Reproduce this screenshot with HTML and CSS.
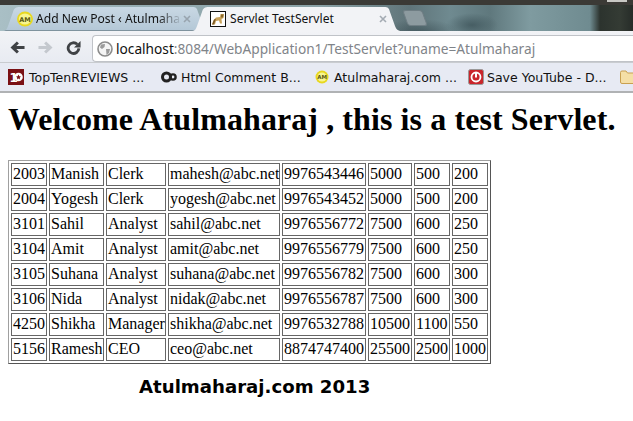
FILE: index.html
```
<!DOCTYPE html>
<html>
<head>
<meta charset="utf-8">
<title>Servlet TestServlet</title>
<link rel="stylesheet" href="styles.css">
</head>
<body>
<header class="chrome">
  <div class="topbar"><span class="winctl"></span></div>
  <div class="tabstrip">
    <div class="tab tab-bg">
      <svg class="fav" viewBox="0 0 16 16"><ellipse cx="8" cy="8" rx="8" ry="7.5" fill="#e8d820"/><ellipse cx="8" cy="8" rx="6.2" ry="5.6" fill="#f8f590"/><text x="8" y="10.6" class="am">AM</text></svg>
      <span class="tab-title fade">Add New Post ‹ Atulmahar</span>
      <svg class="close" viewBox="0 0 8 8"><path d="M1 1L7 7M7 1L1 7" stroke="#98a4ae" stroke-width="1.6"/></svg>
    </div>
    <div class="tab tab-active">
      <svg class="fav" viewBox="0 0 16 16"><rect x=".5" y=".5" width="15" height="15" fill="#fff" stroke="#111"/><path d="M2 13.500L4 8.500L6 6.500L10 6L10.500 3L14 3L13.500 7L11.500 8L12 12.500L10 12.500L9 9.500L6 10L5 13.500Z" fill="#c9a25a"/><path d="M2 13.500L4 8.500L6 8L5 10.500L4 13.500Z" fill="#7c5a24"/><path d="M11 3.500L13.500 3.500L13 6.500L11 6.500Z" fill="#8a6a2e"/></svg>
      <span class="tab-title">Servlet TestServlet</span>
      <svg class="close" viewBox="0 0 8 8"><path d="M1 1L7 7M7 1L1 7" stroke="#a4abb3" stroke-width="1.6"/></svg>
    </div>
    <div class="newtab"></div>
  </div>
  <div class="toolbar">
    <svg class="nav" viewBox="0 0 16 16"><path d="M.5 8L7.300 1.700L9.500 3.800L6.800 6.300H15.500V9.700H6.800L9.500 12.200L7.300 14.300Z" fill="#3f4245"/></svg>
    <svg class="nav" viewBox="0 0 16 16"><path d="M15.500 8L8.700 1.700L6.500 3.800L9.200 6.300H.5V9.700H9.200L6.500 12.200L8.700 14.300Z" fill="#c4c8ce"/></svg>
    <svg class="nav" viewBox="0 0 16 16"><path d="M12 4.600A5.700 5.700 0 1 0 13.700 9" fill="none" stroke="#3f4245" stroke-width="3"/><path d="M15.500 1V8H8.500Z" fill="#3f4245"/></svg>
    <div class="omnibox">
      <svg class="globe" viewBox="0 0 16 16"><circle cx="8" cy="8" r="7" fill="#f4f4f4" stroke="#8c8c8c" stroke-width="1.6"/><path d="M4 3.500L8 3L7.500 6L5 8L3 6.500ZM9 8L13 8L12 12L9.500 14Z" fill="#9a9a9a"/></svg>
      <span class="url"><span class="host">localhost</span>:8084/WebApplication1/TestServlet?uname=Atulmaharaj</span>
    </div>
  </div>
  <nav class="bookmarks">
    <div class="bm bm-1">
      <svg class="bm-icon" viewBox="0 0 16 16"><rect width="16" height="16" fill="#7a1014"/><text x="1.500" y="13" class="ten">1</text><circle cx="10.500" cy="8" r="4.300" fill="#fff"/><path d="M10.500 5.400L11.300 7.300L13 7.500L11.700 8.800L12 10.600L10.500 9.600L9 10.600L9.300 8.800L8 7.500L9.700 7.300Z" fill="#7a1014"/></svg>
      <span>TopTenREVIEWS ...</span>
    </div>
    <div class="bm bm-2">
      <svg class="bm-icon" viewBox="0 0 16 16"><circle cx="5.500" cy="8" r="4" fill="none" stroke="#222" stroke-width="3"/><circle cx="12" cy="8" r="2.600" fill="none" stroke="#222" stroke-width="2.400"/></svg>
      <span>Html Comment B...</span>
    </div>
    <div class="bm bm-3">
      <svg class="bm-icon" viewBox="0 0 16 16"><circle cx="8" cy="8" r="6.500" fill="#e8d820"/><circle cx="8" cy="8" r="4.600" fill="#f8f590"/><text x="8" y="10" class="am am-sm">AM</text></svg>
      <span>Atulmaharaj.com ...</span>
    </div>
    <div class="bm bm-4">
      <svg class="bm-icon" viewBox="0 0 16 16"><rect x=".5" y=".5" width="15" height="15" rx="2" fill="#c9262c" stroke="#999"/><circle cx="8" cy="8" r="4.500" fill="none" stroke="#fff" stroke-width="1.800"/><path d="M8 3V8.500" stroke="#fff" stroke-width="2"/></svg>
      <span>Save YouTube - D...</span>
    </div>
    <svg class="bm-icon folder" viewBox="0 0 16 14"><path d="M.5 2.500Q.5 1 2 1H6L7.500 3H14Q15.500 3 15.500 4.500V12Q15.500 13.500 14 13.500H2Q.5 13.500 .5 12Z" fill="#f5dfa6" stroke="#c9a050"/></svg>
  </nav>
</header>
<main class="page">
  <h1 class="headline">Welcome Atulmaharaj , this is a test Servlet.</h1>
  <table class="staff">
    <colgroup><col class="c1"><col class="c2"><col class="c3"><col class="c4"><col class="c5"><col class="c6"><col class="c7"><col class="c8"></colgroup>
    <tr><td>2003</td><td>Manish</td><td>Clerk</td><td>mahesh@abc.net</td><td>9976543446</td><td>5000</td><td>500</td><td>200</td></tr>
    <tr><td>2004</td><td>Yogesh</td><td>Clerk</td><td>yogesh@abc.net</td><td>9976543452</td><td>5000</td><td>500</td><td>200</td></tr>
    <tr><td>3101</td><td>Sahil</td><td>Analyst</td><td>sahil@abc.net</td><td>9976556772</td><td>7500</td><td>600</td><td>250</td></tr>
    <tr><td>3104</td><td>Amit</td><td>Analyst</td><td>amit@abc.net</td><td>9976556779</td><td>7500</td><td>600</td><td>250</td></tr>
    <tr><td>3105</td><td>Suhana</td><td>Analyst</td><td>suhana@abc.net</td><td>9976556782</td><td>7500</td><td>600</td><td>300</td></tr>
    <tr><td>3106</td><td>Nida</td><td>Analyst</td><td>nidak@abc.net</td><td>9976556787</td><td>7500</td><td>600</td><td>300</td></tr>
    <tr><td>4250</td><td>Shikha</td><td>Manager</td><td>shikha@abc.net</td><td>9976532788</td><td>10500</td><td>1100</td><td>550</td></tr>
    <tr><td>5156</td><td>Ramesh</td><td>CEO</td><td>ceo@abc.net</td><td>8874747400</td><td>25500</td><td>2500</td><td>1000</td></tr>
  </table>
  <p class="footer-note">Atulmaharaj.com 2013</p>
</main>
</body>
</html>
```
FILE: styles.css
```
html, body { margin: 0; padding: 0; background: #fff; overflow: hidden; }
body { width: 633px; height: 421px; font-family: "Liberation Serif", serif; font-size: 16px; }

.chrome { height: 93px; display: flex; flex-direction: column; font-family: "DejaVu Sans", sans-serif; font-size: 12.5px; color: #111; }
.topbar { height: 5px; background: #3b3a36; flex: none; display: flex; justify-content: flex-end; padding-right: 6px; box-sizing: border-box; }
.winctl { width: 20px; height: 2px; background: #c8c8c4; }
.tabstrip { height: 26px; flex: none; display: flex; align-items: flex-end; padding-left: 2px;
  background:
    radial-gradient(ellipse 26px 12px at 472px 20px, rgba(60,82,88,.75), rgba(60,82,88,0)),
    radial-gradient(ellipse 40px 14px at 420px 28px, rgba(50,70,76,.6), rgba(50,70,76,0)),
    linear-gradient(90deg, #a9bfc5 0, #96adb3 130px, #8aa1a6 320px, #5f7479 410px, #6f8a90 450px, #5f787d 490px, #7f9ba0 530px, #6f8b90 590px, #2c332e 600px, #343b34 620px, #262c28 633px); }

.tab { flex: none; display: flex; align-items: center; box-sizing: border-box; font-family: "Noto Sans", sans-serif; font-size: 12.1px; }
.tab-bg { width: 203px; height: 24px; padding: 0 14px 1px 15px; gap: 3px; margin-right: -14px;
  background: linear-gradient(#c9d8e4, #b3c7d6); box-shadow: inset 0 -1px 0 #7f939e;
  clip-path: path("M0 24C4 24 5 22 6 19L11 5C12 1 14 0 18 0H190C194 0 195 1 196 5L203 24Z"); }
.tab-active { width: 211px; height: 24px; padding: 0 15px 1px 19px; gap: 4px; background: #f2f3f6; position: relative;
  clip-path: path("M0 24C4 24 5 22 6 19L11 5C12 1 14 0 18 0H193C197 0 198 1 199 5L204 19C205 22 207 24 211 24Z"); }
.fav { width: 16px; height: 16px; flex: none; }
.am { font: bold 6.5px "DejaVu Sans", sans-serif; text-anchor: middle; fill: #5a5a10; }
.am-sm { font-size: 5.5px; }
.tab-title { flex: 1; white-space: nowrap; min-width: 0; }
.fade { -webkit-mask-image: linear-gradient(90deg, #000 122px, transparent 146px); mask-image: linear-gradient(90deg, #000 122px, transparent 146px); }
.close { width: 8px; height: 8px; flex: none; }
.newtab { width: 18px; height: 14px; margin: 0 0 5px 3px; background: #8d9ba0; flex: none; border: 1px solid #6f7e84; border-radius: 3px; transform: skewX(20deg); }

.toolbar { height: 31px; flex: none; display: flex; align-items: flex-end; padding-left: 10px; gap: 13px; background: linear-gradient(#f2f3f6, #e8ebf2); box-sizing: border-box; }
.nav { width: 15px; height: 15px; flex: none; margin-bottom: 7px; }
.omnibox { flex: 1; height: 27px; margin: 0 -4px 0 -2px; background: #fff; border: 1px solid #c0c3c8; border-right: 0; border-radius: 4px 0 0 4px; display: flex; align-items: center; padding-left: 4px; gap: 3px; min-width: 0; box-sizing: border-box; }
.globe { width: 16px; height: 16px; flex: none; }
.url { color: #7f8489; white-space: nowrap; font-size: 13.7px; font-family: "Noto Sans", "DejaVu Sans", sans-serif; }
.host { color: #111; }

.bookmarks { height: 31px; flex: none; display: flex; align-items: center; padding-left: 8px; background: #e7eaf3; border-top: 1px solid #c9ccd0; border-bottom: 2px solid #b0b2b4; box-sizing: border-box; overflow: hidden; }
.bm { display: flex; align-items: center; gap: 4px; flex: none; white-space: nowrap; }
.bm-icon { width: 16px; height: 16px; flex: none; }
.bm-1 { width: 153px; gap: 5px; }
.bm-2 { width: 153px; }
.bm-3 { width: 154px; }
.bm-4 { width: 152px; gap: 3px; }
.ten { font: bold 12px "DejaVu Sans", sans-serif; fill: #fff; }

.page { padding: 8px; }
.headline { margin: 0 0 22px; font-size: 32px; font-weight: bold; line-height: 37px; letter-spacing: .09px; }
.staff { font-size: 16px; table-layout: fixed; width: 483px; border-spacing: 2px; border-collapse: separate; border: 1px solid; border-color: #a0a0a0 #555 #555 #a0a0a0; }
.staff td { border: 1px solid #666; padding: 0 1px 2px; line-height: 19px; white-space: nowrap; }
.c1 { width: 36px; }
.c2 { width: 55px; }
.c3 { width: 60px; }
.c4 { width: 112px; }
.c5 { width: 84px; }
.c6 { width: 44px; }
.c7 { width: 36px; }
.c8 { width: 36px; }
.footer-note { margin: 12px 0 0 131px; font: bold 18.15px "DejaVu Sans", sans-serif; }
```
